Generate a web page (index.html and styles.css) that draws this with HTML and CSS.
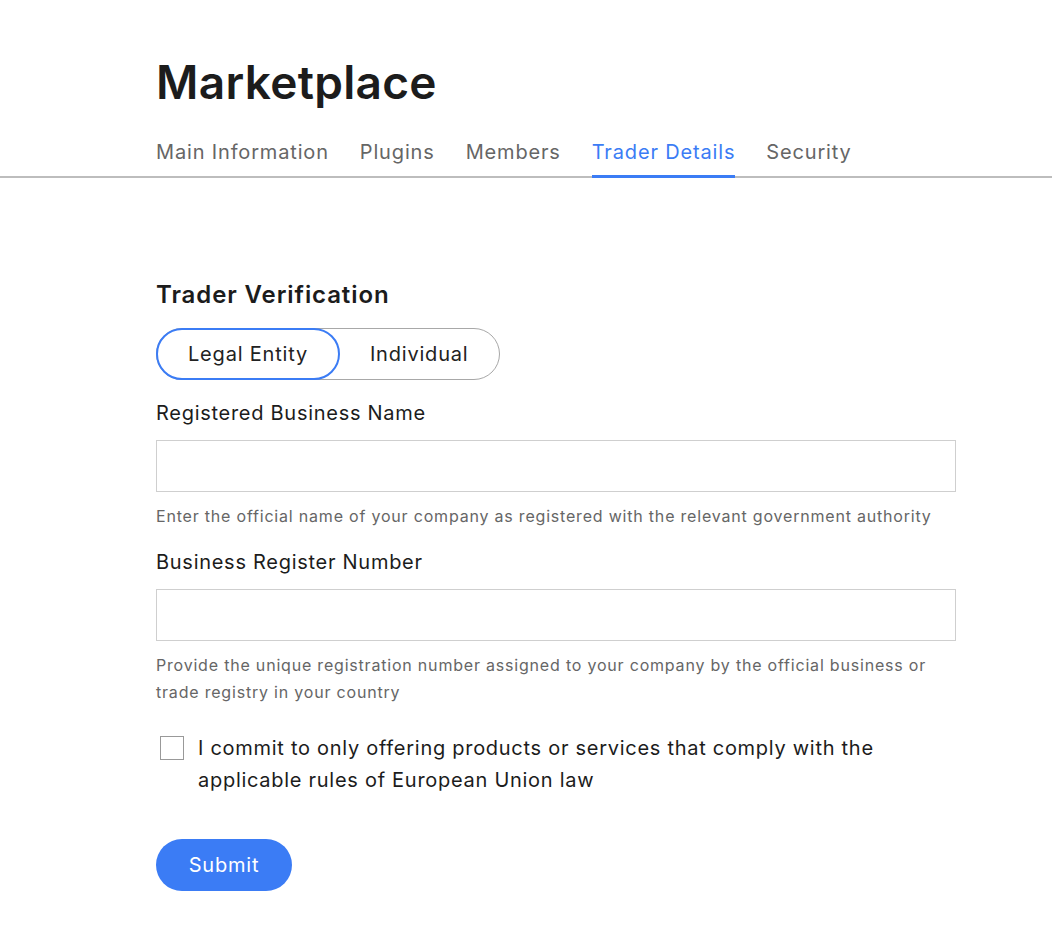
FILE: index.html
```html
<!DOCTYPE html>
<html lang="en">
<head>
    <meta charset="UTF-8">
    <meta name="viewport" content="width=device-width, initial-scale=1.0">
    <title>Marketplace</title>
    <link rel="stylesheet" href="styles.css">
</head>
<body>
    <header class="topo">
        <h1>Marketplace</h1>
        <nav class="abas">
            <a href="#">Main Information</a>
            <a href="#">Plugins</a>
            <a href="#">Members</a>
            <a href="#" class="ativa">Trader Details</a>
            <a href="#">Security</a>
        </nav>
    </header>
    <main class="conteudo">
        <h2>Trader Verification</h2>
        <div class="alternar">
            <button class="opcao selecionada">Legal Entity</button>
            <button class="opcao">Individual</button>
        </div>
        <div class="campo">
            <label for="nomeEmpresa">Registered Business Name</label>
            <input type="text" id="nomeEmpresa">
            <p class="ajuda">Enter the official name of your company as registered with the relevant government authority</p>
        </div>
        <div class="campo">
            <label for="numeroRegistro">Business Register Number</label>
            <input type="text" id="numeroRegistro">
            <p class="ajuda">Provide the unique registration number assigned to your company by the official business or trade registry in your country</p>
        </div>
        <label class="compromisso">
            <span class="caixa"></span>
            <span>I commit to only offering products or services that comply with the applicable rules of European Union law</span>
        </label>
        <button class="btn-enviar">Submit</button>
    </main>
</body>
</html>
```

FILE: styles.css
```css
body {
    margin: 0;
    background: #ffffff;
    color: #1c1c1c;
    font-family: Inter, "Noto Sans", sans-serif;
    letter-spacing: 0.045em;
}
.topo {
    padding: 54px 0 0 156px;
    border-bottom: 2px solid #bdbdbd;
}
h1 {
    margin: 0 0 30px;
    font-size: 46px;
    font-weight: 600;
    line-height: 56px;
    letter-spacing: 0.3px;
}
.abas {
    display: flex;
    gap: 31px;
}
.abas a {
    color: #666;
    text-decoration: none;
    font-size: 20px;
    line-height: 24px;
    letter-spacing: 0.042em;
    padding-bottom: 11px;
    margin-bottom: -2px;
    border-bottom: 3px solid transparent;
}
.abas a.ativa {
    color: #3b7cf5;
    border-bottom-color: #3b7cf5;
}
.conteudo {
    padding: 102px 0 40px 156px;
    width: 800px;
}
h2 {
    margin: 0 0 18px;
    font-size: 24px;
    font-weight: 600;
    line-height: 30px;
    letter-spacing: 0.9px;
}
.alternar {
    display: inline-flex;
    border: 1px solid #a8a8a8;
    border-radius: 27px;
    height: 50px;
    margin-bottom: 20px;
}
.opcao {
    font-family: inherit;
    font-size: 20px;
    letter-spacing: 0.04em;
    color: #222;
    background: none;
    border: 2px solid transparent;
    border-radius: 27px;
    padding: 0 30px;
    margin: -1px;
    cursor: pointer;
}
.opcao.selecionada {
    border-color: #3b7cf5;
}
.campo label {
    display: block;
    font-size: 20px;
    line-height: 26px;
    margin-bottom: 14px;
}
.campo input {
    display: block;
    box-sizing: border-box;
    width: 800px;
    height: 52px;
    border: 1px solid #cfcfcf;
    border-radius: 0;
    font-size: 18px;
    padding: 0 14px;
}
.ajuda {
    margin: 11px 0 19px;
    font-size: 16px;
    line-height: 27px;
    letter-spacing: 0.05em;
    color: #666;
}
.compromisso {
    display: flex;
    gap: 14px;
    font-size: 20px;
    line-height: 32px;
    padding-left: 4px;
    margin-top: 26px;
    margin-bottom: 43px;
    padding-right: 40px;
}
.caixa {
    flex: none;
    width: 22px;
    height: 22px;
    border: 1px solid #999;
    margin-top: 4px;
}
.btn-enviar {
    font-family: inherit;
    font-size: 20px;
    letter-spacing: 0.04em;
    color: #fff;
    background: #3b7cf5;
    border: none;
    border-radius: 26px;
    width: 136px;
    height: 52px;
    cursor: pointer;
}
.btn-enviar:hover { opacity: 0.9; }
```
